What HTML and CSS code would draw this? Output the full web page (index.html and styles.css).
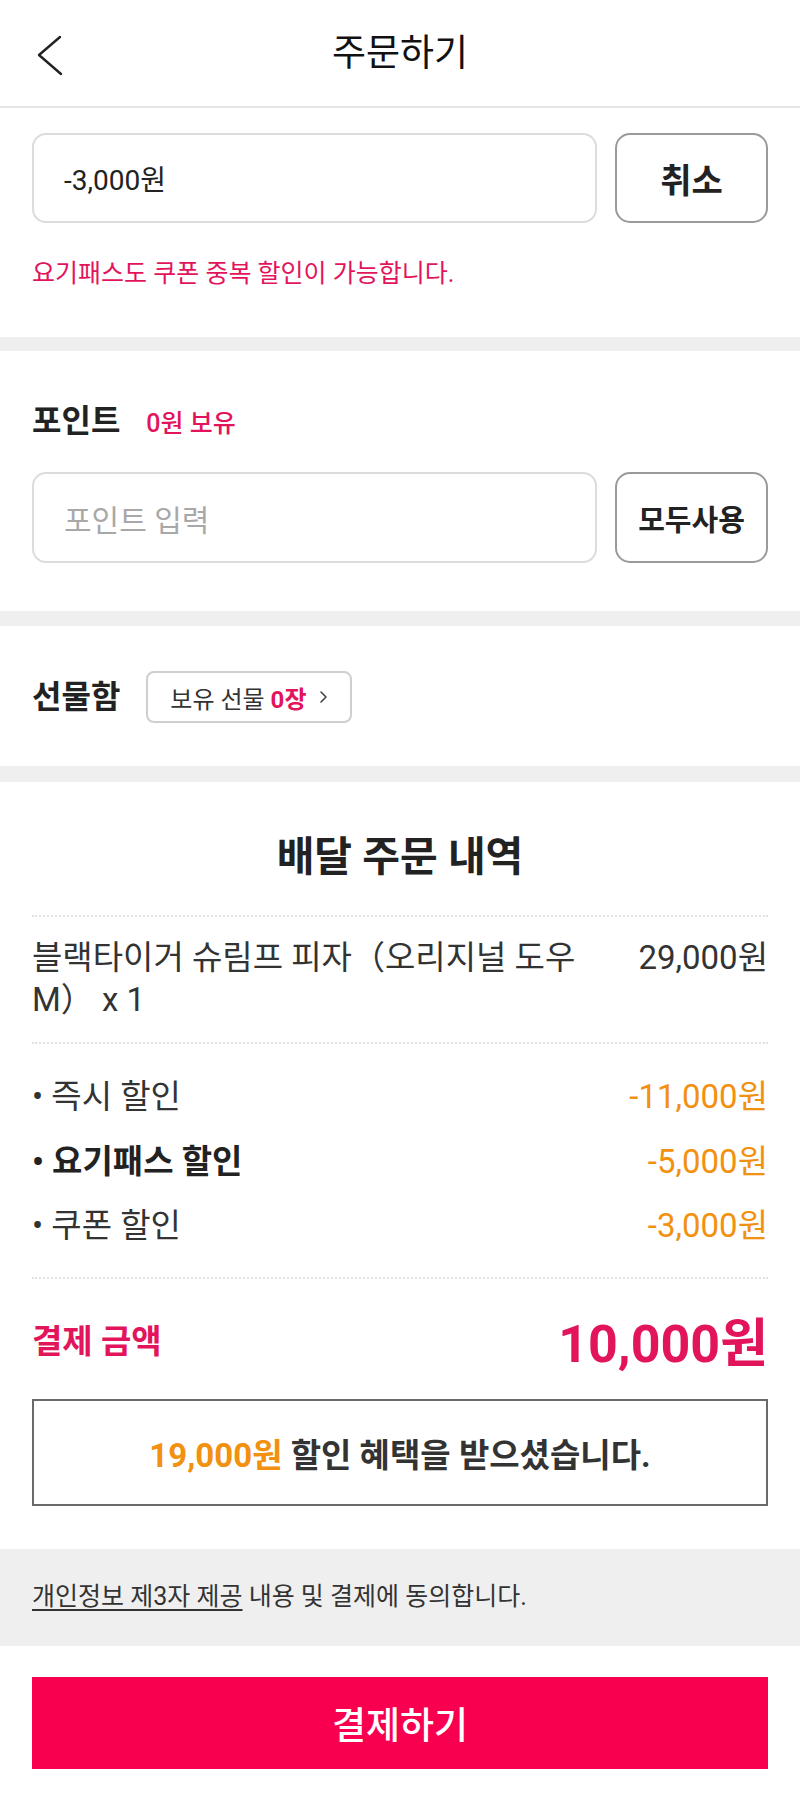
FILE: index.html
```html
<!DOCTYPE html>
<html lang="ko">
<head>
<meta charset="utf-8">
<title>주문하기</title>
<link rel="stylesheet" href="styles.css">
</head>
<body>
<header class="topbar">
  <button class="back" aria-label="뒤로">
    <svg width="40" height="50" viewBox="0 0 40 50"><polyline points="28,8 7,26 29,45" fill="none" stroke="#222" stroke-width="2.4" stroke-linecap="round" stroke-linejoin="round"/></svg>
  </button>
  <h1 class="topbar-title">주문하기</h1>
</header>

<section class="panel coupon">
  <div class="field-row">
    <div class="field">-3,000원</div>
    <button class="btn-outline">취소</button>
  </div>
  <p class="note">요기패스도 쿠폰 중복 할인이 가능합니다.</p>
</section>

<section class="panel points">
  <div class="title-row">
    <h2 class="panel-title">포인트</h2>
    <span class="balance">0원 보유</span>
  </div>
  <div class="field-row">
    <div class="field placeholder">포인트 입력</div>
    <button class="btn-outline btn-small">모두사용</button>
  </div>
</section>

<section class="panel gift">
  <h2 class="panel-title">선물함</h2>
  <button class="gift-chip">보유 선물 <b>0장</b>
    <svg width="12" height="16" viewBox="0 0 12 16"><polyline points="3,3 8,8 3,13" fill="none" stroke="#444" stroke-width="1.6" stroke-linecap="round" stroke-linejoin="round"/></svg>
  </button>
</section>

<section class="panel order">
  <h2 class="order-title">배달 주문 내역</h2>
  <div class="item-row">
    <span class="item-name">블랙타이거 슈림프 피자（오리지널 도우 M） x 1</span>
    <span class="item-price">29,000원</span>
  </div>
  <ul class="discounts">
    <li><span class="d-label">• 즉시 할인</span><span class="d-value">-11,000원</span></li>
    <li class="strong"><span class="d-label">• 요기패스 할인</span><span class="d-value">-5,000원</span></li>
    <li><span class="d-label">• 쿠폰 할인</span><span class="d-value">-3,000원</span></li>
  </ul>
  <div class="total-row">
    <span class="total-label">결제 금액</span>
    <span class="total-value">10,000원</span>
  </div>
  <div class="benefit"><span class="benefit-amount">19,000원</span> 할인 혜택을 받으셨습니다.</div>
</section>

<div class="agree"><u>개인정보 제3자 제공</u> 내용 및 결제에 동의합니다.</div>

<div class="pay-wrap">
  <button class="pay">결제하기</button>
</div>
</body>
</html>
```

FILE: styles.css
```css
* { box-sizing: border-box; }
html, body { margin: 0; padding: 0; }
body {
  width: 800px;
  background: #fff;
  font-family: Roboto, "Noto Sans CJK KR", sans-serif;
  color: #222;
  word-break: keep-all;
}
button { font-family: inherit; cursor: pointer; }

.topbar {
  height: 108px;
  border-bottom: 2px solid #e6e6e6;
  display: flex;
  align-items: center;
  justify-content: center;
  position: relative;
}
.back {
  position: absolute;
  left: 32px;
  top: 29px;
  border: 0;
  background: none;
  padding: 0;
  width: 40px;
  height: 50px;
}
.back svg { display: block; }
.topbar-title {
  margin: 0;
  font-size: 37px;
  font-weight: 400;
  color: #111;
  line-height: 1;
}

.panel {
  background: #fff;
  padding-left: 32px;
  padding-right: 32px;
}

.coupon {
  padding-top: 25px;
  padding-bottom: 47px;
  border-bottom: 14px solid #efefef;
}
.points {
  padding-top: 50px;
  padding-bottom: 48px;
  border-bottom: 15px solid #efefef;
}
.gift {
  padding-top: 45px;
  padding-bottom: 43px;
  border-bottom: 16px solid #efefef;
  display: flex;
  align-items: center;
  gap: 26px;
}
.order {
  padding-top: 50px;
  padding-bottom: 43px;
}

.field-row {
  display: flex;
  gap: 18px;
  height: 90px;
}
.points .field-row { margin-top: 31px; height: 91px; }
.field {
  flex: 1;
  border: 2px solid #dcdcdc;
  border-radius: 14px;
  display: flex;
  align-items: center;
  padding-left: 30px;
  font-size: 28px;
  color: #222;
}
.field.placeholder { color: #a8a8a8; font-size: 30px; }
.btn-outline {
  width: 153px;
  border: 2px solid #9a9a9a;
  border-radius: 15px;
  background: #fff;
  font-size: 34px;
  font-weight: 700;
  color: #222;
}
.btn-small { font-size: 29px; }

.note {
  margin: 35px 0 0;
  font-size: 25px;
  line-height: 32px;
  color: #e2145c;
}

.title-row {
  display: flex;
  align-items: center;
  gap: 26px;
  height: 40px;
}
.panel-title {
  margin: 0;
  font-size: 32px;
  font-weight: 700;
  color: #222;
  line-height: 40px;
}
.balance {
  font-size: 25px;
  color: #e2145c;
  font-weight: 500;
}

.gift-chip {
  height: 52px;
  padding: 0 20px 0 22px;
  border: 2px solid #cfcfcf;
  border-radius: 8px;
  background: #fff;
  font-size: 24px;
  color: #333;
  display: flex;
  align-items: center;
  gap: 6px;
}
.gift-chip b { color: #e2145c; font-weight: 700; margin-right: 6px; }

.order-title {
  margin: 0;
  text-align: center;
  font-size: 41px;
  font-weight: 700;
  line-height: 50px;
  color: #222;
  padding-bottom: 33px;
  border-bottom: 2px dotted #e2e2e2;
}

.item-row {
  display: flex;
  justify-content: space-between;
  align-items: flex-start;
  gap: 50px;
  padding: 20px 0 21px;
  border-bottom: 2px dotted #e2e2e2;
  font-size: 33px;
  line-height: 42px;
  color: #333;
}
.item-name { flex: 1; }
.item-price { white-space: nowrap; }

.discounts {
  list-style: none;
  margin: 0;
  padding: 32px 0 30px;
  border-bottom: 2px dotted #e2e2e2;
  display: flex;
  flex-direction: column;
  gap: 22.5px;
}
.discounts li {
  display: flex;
  justify-content: space-between;
  font-size: 33px;
  line-height: 42px;
  color: #333;
}
.discounts li.strong .d-label { font-weight: 700; color: #222; }
.d-value { color: #f2900f; }

.total-row {
  display: flex;
  justify-content: space-between;
  align-items: center;
  height: 60px;
  margin-top: 30px;
}
.total-label {
  font-size: 33px;
  font-weight: 700;
  color: #e2145c;
}
.total-value {
  font-size: 52px;
  font-weight: 700;
  color: #e2145c;
}

.benefit {
  margin-top: 30px;
  height: 107px;
  border: 2px solid #6a6a6a;
  display: flex;
  align-items: center;
  justify-content: center;
  font-size: 33px;
  font-weight: 700;
  color: #333;
  white-space: pre;
}
.benefit-amount { color: #f2900f; }

.agree {
  background: #efefef;
  padding: 32px 32px 33px;
  font-size: 25px;
  line-height: 32px;
  color: #333;
}
.agree u { text-underline-offset: 4px; }

.pay-wrap {
  padding: 31px 32px 24px;
}
.pay {
  display: block;
  width: 100%;
  height: 92px;
  border: 0;
  background: #f8004f;
  color: #fff;
  font-size: 37px;
  font-weight: 500;
}
```
